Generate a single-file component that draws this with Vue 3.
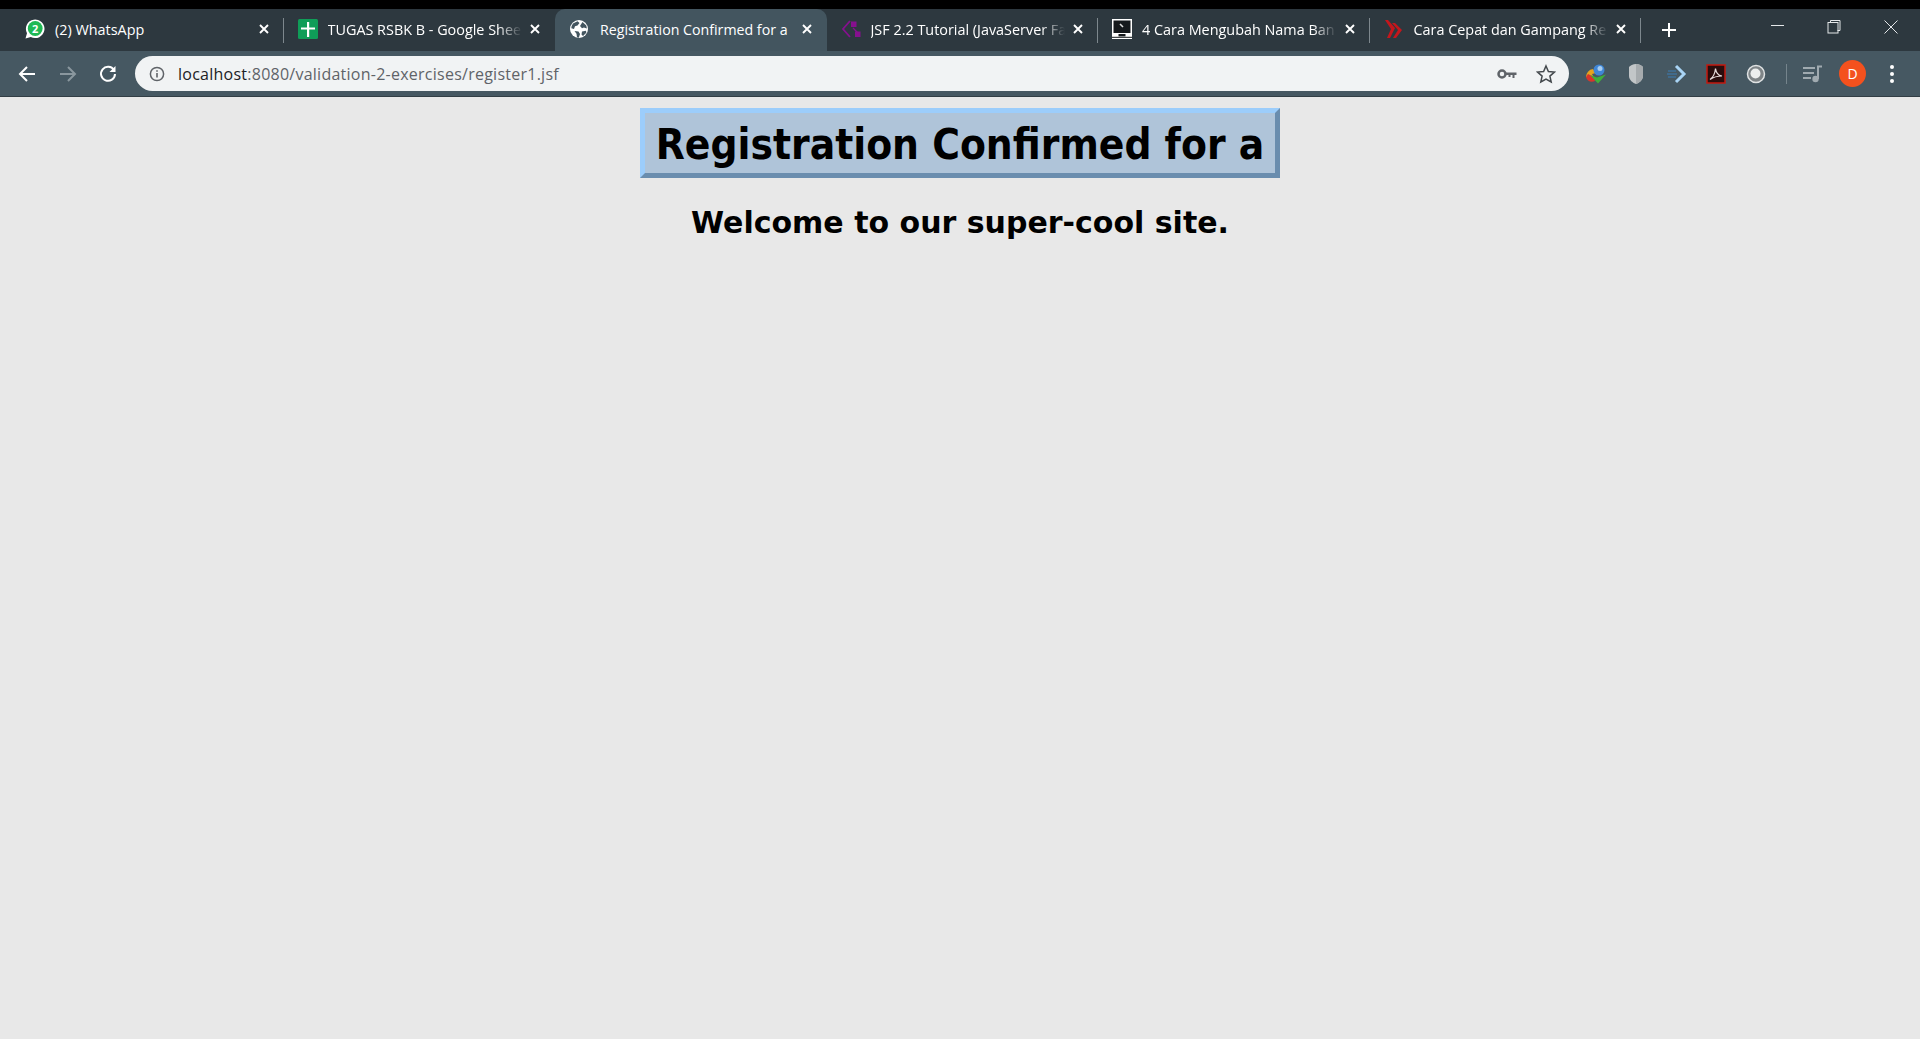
<script setup>
const tabs = [
  { title: '(2) WhatsApp', icon: 'whatsapp' },
  { title: 'TUGAS RSBK B - Google Shee', icon: 'sheets' },
  { title: 'Registration Confirmed for a', icon: 'globe', active: true },
  { title: 'JSF 2.2 Tutorial (JavaServer Fa', icon: 'jsf' },
  { title: '4 Cara Mengubah Nama Ban', icon: 'monitor' },
  { title: 'Cara Cepat dan Gampang Re', icon: 'chevrons' }
]
</script>

<template>
  <div class="page">
    <div class="top-strip"></div>

    <div class="tabstrip">
      <div
        v-for="tab in tabs"
        :key="tab.title"
        class="tab"
        :class="{ active: tab.active, fade: !tab.active && tab.icon !== 'whatsapp' }"
      >
        <span class="favicon">
          <svg v-if="tab.icon === 'whatsapp'" viewBox="0 0 20 20" width="20" height="20">
            <path d="M.5 19.500l1.500-5.300A9.300 9.300 0 1 1 5.800 18z" fill="#fff" />
            <circle cx="10.200" cy="9.500" r="7.400" fill="#1fb955" />
            <text x="10.200" y="13.600" text-anchor="middle" class="wa-count">2</text>
          </svg>
          <svg v-else-if="tab.icon === 'sheets'" viewBox="0 0 20 20" width="20" height="20">
            <rect x="0" y="0" width="20" height="20" rx="1.500" fill="#0f9d58" />
            <path d="M9 3h2.200v5.400H17v2.200h-5.800V18H9v-7.400H3V8.400h6z" fill="#fff" />
          </svg>
          <svg v-else-if="tab.icon === 'globe'" viewBox="0 0 20 20" width="20" height="20">
            <circle cx="10" cy="10" r="9" fill="#fff" />
            <path d="M4 4.500l4.500-2.300 2 1.800-2 2.500-2.500.8-1 2.700-2.700-.8a9 9 0 0 1 1.700-4.700zM13.500 3l3.800 3.500.6 3-3-1-1.900.8-2-2.300zM5.500 12l4 .5 1.500 2.500-1.200 3.800-1.800-.6-.5-3.500zM13 12.500l4-.8.300 2-3.300 3.300-1.500-1.500z" fill="#43555f" />
          </svg>
          <svg v-else-if="tab.icon === 'jsf'" viewBox="0 0 20 20" width="20" height="20">
            <path d="M9 2L2 10l7 8" fill="none" stroke="#86108e" stroke-width="1.800" />
            <path d="M12 9l5 5" fill="none" stroke="#86108e" stroke-width="1.200" />
            <rect x="10" y="2.500" width="5.500" height="5.500" fill="#86108e" />
            <rect x="14" y="12.500" width="5.500" height="5.500" fill="#86108e" />
          </svg>
          <svg v-else-if="tab.icon === 'monitor'" viewBox="0 0 20 20" width="20" height="20">
            <rect x="0" y="0" width="20" height="20" fill="#fff" />
            <rect x="1.500" y="1.500" width="17" height="12.500" fill="#15191c" />
            <path d="M8 5l3 3" stroke="#ddd" stroke-width="1.600" />
            <rect x="6.500" y="15" width="7" height="2.400" fill="#15191c" />
            <rect x="0" y="17.800" width="20" height="1" fill="#15191c" />
          </svg>
          <svg v-else viewBox="0 0 20 20" width="20" height="20">
            <path d="M1 1h3l7 8-5 10H3l4-9zM8 4h3l7 7-6 8H9l5-8z" fill="#c4161c" />
          </svg>
        </span>
        <span class="tab-title">{{ tab.title }}</span>
        <svg class="tab-close" viewBox="0 0 10 10" width="10" height="10">
          <path d="M1 1l8 8M9 1l-8 8" stroke="#fff" stroke-width="1.900" />
        </svg>
      </div>
      <svg class="new-tab" viewBox="0 0 16 16" width="16" height="16">
        <path d="M8 1v14M1 8h14" stroke="#fff" stroke-width="2" />
      </svg>
      <div class="window-controls">
        <svg viewBox="0 0 14 14" width="14" height="14"><path d="M0 5.500h13" stroke="#e4e7e9" stroke-width="1" /></svg>
        <svg viewBox="0 0 14 14" width="14" height="14">
          <path d="M3.500 2.500V.5h9.500v10h-2.500" fill="none" stroke="#e4e7e9" />
          <rect x="1" y="2.500" width="10" height="10.500" fill="none" stroke="#e4e7e9" />
        </svg>
        <svg viewBox="0 0 14 14" width="14" height="14"><path d="M.5.500l13 13M13.500.500l-13 13" stroke="#e4e7e9" /></svg>
      </div>
    </div>

    <div class="toolbar">
      <div class="nav">
        <svg viewBox="0 0 18 18" width="18" height="18"><path d="M17 9H2.500M9 2L2 9l7 7" fill="none" stroke="#fff" stroke-width="2" /></svg>
        <svg viewBox="0 0 18 18" width="18" height="18"><path d="M1 9h14.500M9 2l7 7-7 7" fill="none" stroke="#8a979e" stroke-width="2" /></svg>
        <svg viewBox="0 0 18 18" width="18" height="18">
          <path d="M15 5.200A7 7 0 1 0 16 9" fill="none" stroke="#fff" stroke-width="2" />
          <path d="M16.500 1v6h-6z" fill="#fff" />
        </svg>
      </div>

      <div class="omnibox">
        <svg class="info" viewBox="0 0 16 16" width="16" height="16">
          <circle cx="8" cy="8" r="6.600" fill="none" stroke="#5f6368" stroke-width="1.500" />
          <path d="M8 7v4.500M8 4.200v1.600" stroke="#5f6368" stroke-width="1.600" />
        </svg>
        <div class="url"><span class="host">localhost</span>:8080/validation-2-exercises/register1.jsf</div>
        <svg class="key" viewBox="0 0 20 12" width="20" height="12">
          <circle cx="5" cy="6" r="3.500" fill="none" stroke="#5f6368" stroke-width="2.500" />
          <path d="M9 4.500h10.500v2.500h-2v3h-2V7h-2v2h-2V7H9z" fill="#5f6368" />
        </svg>
        <svg class="star" viewBox="0 0 20 20" width="20" height="20">
          <path d="M10 2l2.400 5.500 6 .6-4.500 4 1.300 5.900L10 15l-5.200 3 1.300-5.900-4.500-4 6-.6z" fill="none" stroke="#44494d" stroke-width="1.500" />
        </svg>
      </div>

      <div class="extensions">
        <svg class="ext" viewBox="0 0 22 22" width="22" height="22">
          <path d="M1 14a8 8 0 0 1 7-8l3 4-4 1 2 4z" fill="#e5a31e" />
          <path d="M1 14c1 4 5 6 9 4l-1-4-6-3z" fill="#d8352a" />
          <circle cx="14" cy="7" r="5.500" fill="#3f86d6" />
          <circle cx="15" cy="5.500" r="2.500" fill="#a8cdf0" />
          <path d="M5 12l7 2.500 9-3-8 9z" fill="#3fae3c" />
        </svg>
        <svg class="ext" viewBox="0 0 18 22" width="18" height="22">
          <path d="M9 1c3 0 6 1.500 7 3v9c0 4-4 7-7 8-3-1-7-4-7-8V4c1-1.500 4-3 7-3z" fill="#c2c6c8" />
          <path d="M9 1c3 0 6 1.500 7 3v9c0 4-4 7-7 8z" fill="#a6abae" />
        </svg>
        <svg class="ext ext-arrow" viewBox="0 0 20 22" width="20" height="22">
          <path d="M9 3l8 8-8 8" fill="none" stroke="#a9d4f5" stroke-width="3" />
          <path d="M1 8h8M0 11h10M1 14h8" stroke="#3a7db5" stroke-width="1" />
        </svg>
        <svg class="ext" viewBox="0 0 20 20" width="20" height="20">
          <rect x="1" y="1" width="18" height="18" fill="#2a0d0d" stroke="#c4190f" stroke-width="1.500" />
          <path d="M4 15.500c3-2 5-6 5.500-11 .5 4 3 7 6.500 7.500-4 0-8.500 1-12 3.500z" fill="none" stroke="#e9dcdc" stroke-width="1.200" />
        </svg>
        <svg class="ext" viewBox="0 0 20 20" width="20" height="20">
          <circle cx="10" cy="10" r="8.500" fill="#7e8487" stroke="#dfe2e3" stroke-width="1.500" />
          <circle cx="9.500" cy="9.500" r="5" fill="#eceeee" />
        </svg>
        <span class="ext-sep"></span>
        <svg class="ext" viewBox="0 0 20 18" width="20" height="18">
          <path d="M0 3h12M0 8h11M0 13h8" stroke="#a0aab0" stroke-width="2" />
          <path d="M15 14V1.500h4" fill="none" stroke="#a0aab0" stroke-width="2" />
          <circle cx="12.500" cy="14" r="3.200" fill="#a0aab0" />
        </svg>
        <span class="avatar">D</span>
        <span class="menu"><i></i><i></i><i></i></span>
      </div>
    </div>

    <main class="content">
      <h1 class="title">Registration Confirmed for a</h1>
      <p class="welcome">Welcome to our super-cool site.</p>
    </main>
  </div>
</template>

<style scoped>
.page {
  display: flex;
  flex-direction: column;
  min-height: 100vh;
  background: #e8e8e8;
  font-family: "Open Sans", "Noto Sans", sans-serif;
}

.top-strip {
  height: 9px;
  background: #000;
}

.tabstrip {
  display: flex;
  align-items: stretch;
  height: 42px;
  padding-left: 12px;
  background: #2d383f;
  color: #fff;
}

.tab {
  position: relative;
  display: flex;
  align-items: center;
  width: 271.500px;
  padding: 0 15px 2px 14px;
  box-sizing: border-box;
  flex: none;
}

.tab:first-child {
  padding-left: 13px;
}

.tab::after {
  content: "";
  position: absolute;
  right: 0;
  top: 9px;
  bottom: 8px;
  width: 1px;
  background: #7d878d;
}

.tab.active {
  background: #43555f;
  border-radius: 10px 10px 0 0;
}

.tab.active::after {
  display: none;
}

.tab:has(+ .tab.active)::after {
  display: none;
}

.favicon {
  display: flex;
  width: 20px;
  height: 20px;
  flex: none;
  margin-right: 10px;
}

.wa-count {
  font-family: "Open Sans", sans-serif;
  font-size: 11px;
  font-weight: 700;
  fill: #fff;
}

.tab-title {
  flex: 1;
  min-width: 0;
  overflow: hidden;
  white-space: nowrap;
  font-size: 14.400px;
}

.tab.active .favicon {
  margin-right: 11px;
}

.tab.active .tab-title {
  font-size: 14.200px;
}

.tab.fade .tab-title {
  -webkit-mask-image: linear-gradient(to right, #000 calc(100% - 24px), transparent);
  mask-image: linear-gradient(to right, #000 calc(100% - 24px), transparent);
}

.tab-close {
  flex: none;
  margin-left: 8px;
}

.new-tab {
  flex: none;
  align-self: center;
  margin-left: 20px;
}

.window-controls {
  display: flex;
  align-items: center;
  gap: 42px;
  margin-left: auto;
  padding: 0 22px 6px 0;
}

.window-controls svg:last-child {
  margin-left: 1px;
}

.toolbar {
  display: flex;
  align-items: center;
  height: 46px;
  box-sizing: border-box;
  background: #465862;
  border-bottom: 1px solid #323e45;
}

.nav {
  display: flex;
  align-items: center;
  gap: 22.500px;
  width: 135px;
  padding-left: 18px;
  box-sizing: border-box;
  flex: none;
}

.omnibox {
  display: flex;
  align-items: center;
  width: 1434px;
  height: 35px;
  padding: 0 13px 0 14px;
  box-sizing: border-box;
  border-radius: 18px;
  background: #f1f3f4;
  flex: none;
}

.info {
  flex: none;
  margin-right: 13px;
}

.url {
  flex: 1;
  font-size: 16px;
  letter-spacing: 0.25px;
  color: #5f6368;
  white-space: nowrap;
}

.host {
  color: #202124;
}

.key {
  margin-right: 19px;
}

.extensions {
  display: flex;
  align-items: center;
  flex: 1;
  padding-left: 16px;
}

.ext {
  flex: none;
  margin-right: 20px;
}

.ext-arrow {
  margin-left: 2px;
  margin-right: 19px;
}

.ext-sep {
  width: 1px;
  height: 20px;
  background: #75848c;
  margin-right: 16px;
}

.avatar {
  display: flex;
  align-items: center;
  justify-content: center;
  width: 27px;
  height: 27px;
  margin-left: -4px;
  border-radius: 50%;
  background: #f4511e;
  color: #fff;
  font-size: 14px;
}

.menu {
  display: flex;
  flex-direction: column;
  gap: 3px;
  margin-left: 24px;
}

.menu i {
  width: 4px;
  height: 4px;
  border-radius: 50%;
  background: #fff;
}

.content {
  display: flex;
  flex-direction: column;
  align-items: center;
  padding-top: 11px;
}

.title {
  margin: 0;
  padding: 3px 11px 0;
  border: 5px solid #9ccdfb;
  border-color: #9ccdfb #6a8dae #6a8dae #9ccdfb;
  background: #afc4d9;
  color: #000;
  font-family: "DejaVu Sans", sans-serif;
  font-stretch: condensed;
  font-size: 42px;
  font-weight: 700;
  line-height: 57px;
  white-space: nowrap;
}

.welcome {
  margin: 27px 0 0;
  font-family: "DejaVu Sans", sans-serif;
  font-size: 30px;
  font-weight: 700;
  line-height: 36px;
  color: #000;
}
</style>

<style>
html, body {
  margin: 0;
  background: #e8e8e8;
}
</style>
